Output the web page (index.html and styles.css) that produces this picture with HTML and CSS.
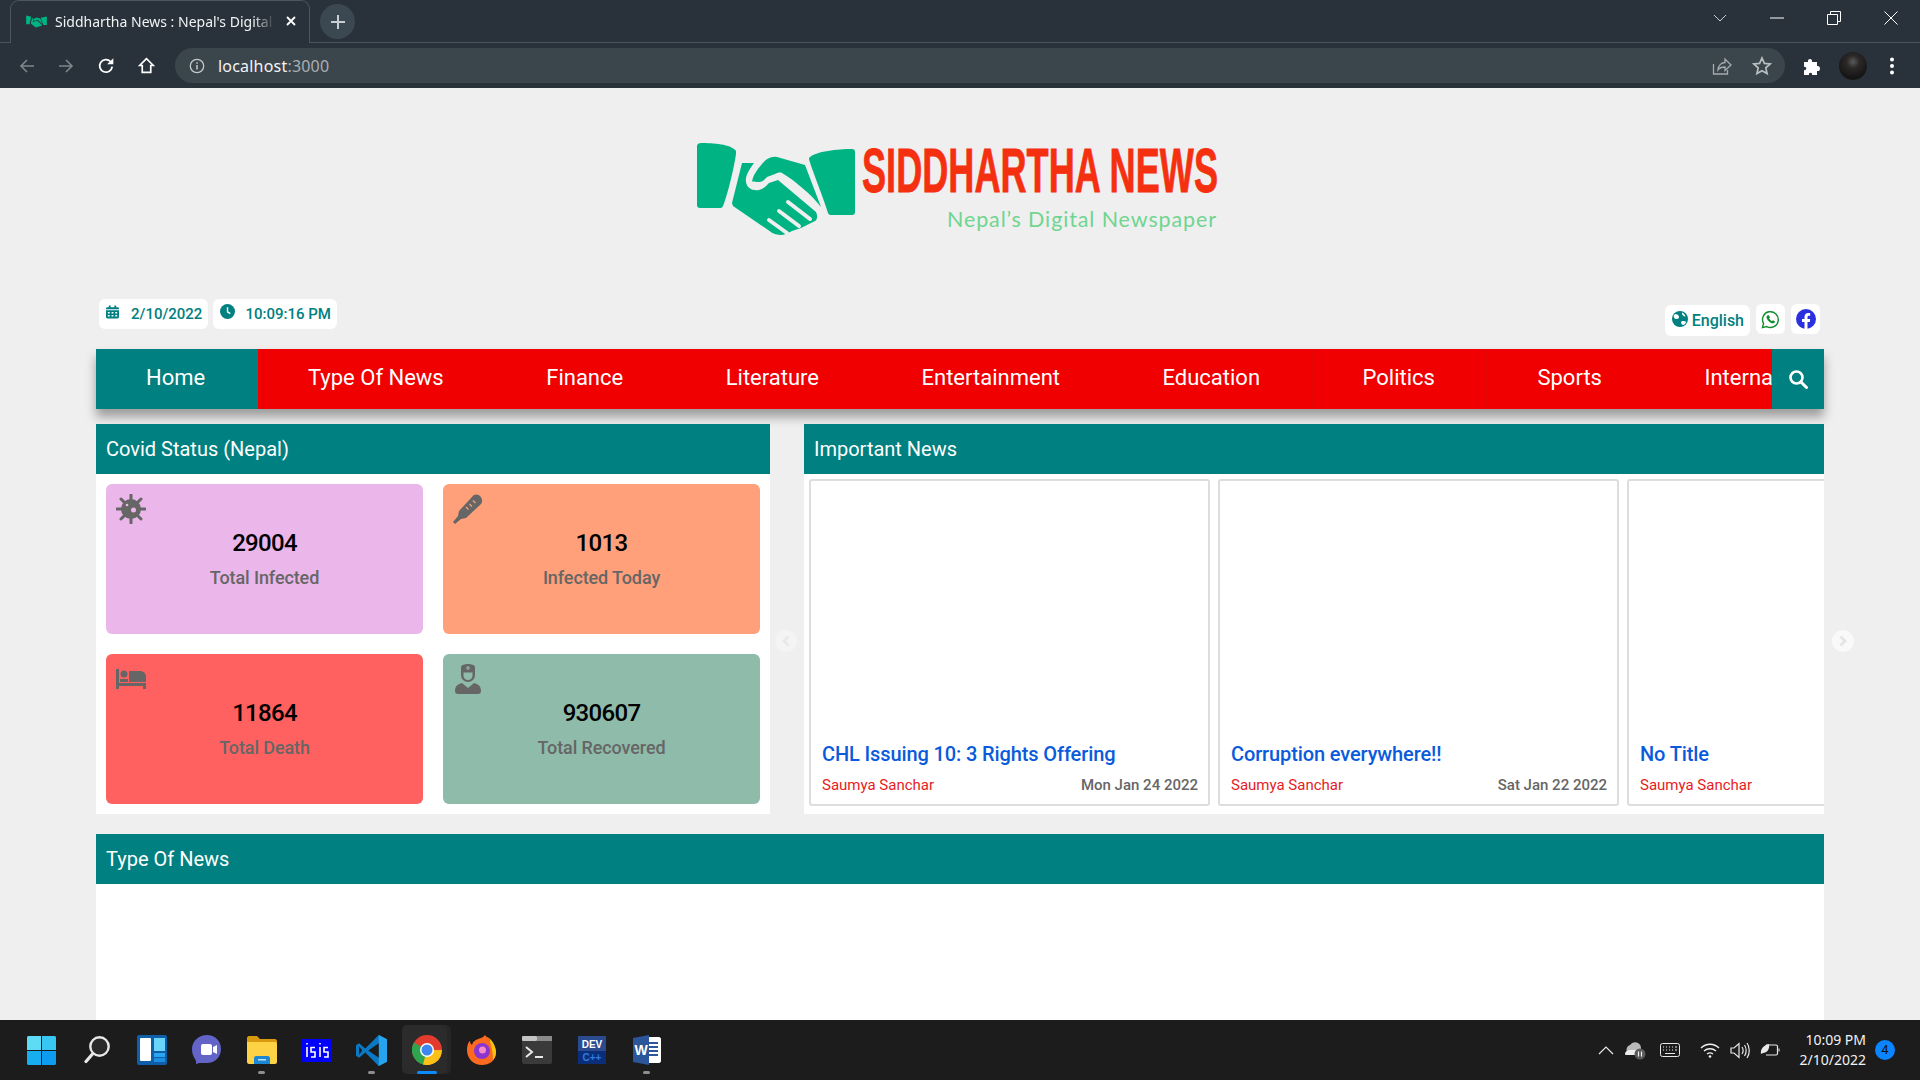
FILE: index.html
```html
<!DOCTYPE html>
<html lang="en">
<head>
    <meta charset="UTF-8">
    <meta name="viewport" content="width=device-width, initial-scale=1.0">
    <title>Siddhartha News</title>
    <link rel="stylesheet" href="styles.css">
</head>
<body>
    <!-- Browser frame -->
    <div class="tab-strip">
        <div class="tab">
            <svg class="tab-favicon" viewBox="0 0 160 96"><path d="M1 3l39 9-13 56H1z M159 9l-46 10 19 56h27z" fill="#00b383"/><path d="M46 23l-10 40 39 30 44-13 2-8-38-32-20 10-12-2 7-25z M56 42l8-17 15-8 30 8 16 42-39-34-15 9z" fill="#00b383"/></svg>
            <span class="tab-title">Siddhartha News : Nepal's Digital</span>
            <svg class="tab-close" viewBox="0 0 12 12"><path d="M2 2l8 8M10 2l-8 8" stroke="#fff" stroke-width="1.8"/></svg>
        </div>
        <div class="new-tab">
            <svg viewBox="0 0 14 14" width="14" height="14"><path d="M7 0v14M0 7h14" stroke="#c8ced2" stroke-width="2"/></svg>
        </div>
        <div class="window-buttons">
            <svg viewBox="0 0 14 8" width="14" height="8"><path d="M1 1l6 6 6-6" fill="none" stroke="#c9cfd3"/></svg>
            <svg viewBox="0 0 14 14" width="14" height="14"><path d="M0 7h14" stroke="#fff"/></svg>
            <svg viewBox="0 0 14 14" width="14" height="14"><path d="M.5 3.500h10v10H.5z M3.500 3V.5h10v10H11" fill="none" stroke="#fff"/></svg>
            <svg viewBox="0 0 14 14" width="14" height="14"><path d="M.5.5l13 13M13.500.5l-13 13" stroke="#fff"/></svg>
        </div>
    </div>
    <div class="toolbar">
        <div class="toolbar-nav">
            <svg viewBox="0 0 16 16" width="16" height="16"><path d="M15 8H2M8 2L2 8l6 6" fill="none" stroke="#7e868c" stroke-width="1.600"/></svg>
            <svg viewBox="0 0 16 16" width="16" height="16"><path d="M1 8h13M8 2l6 6-6 6" fill="none" stroke="#7e868c" stroke-width="1.600"/></svg>
            <svg viewBox="0 0 16 16" width="18" height="18"><path d="M13.500 8.500A5.600 5.600 0 1 1 12 4" fill="none" stroke="#fff" stroke-width="1.600"/><path d="M14.500 1v5.500H9z" fill="#fff"/></svg>
            <svg viewBox="0 0 16 16" width="17" height="17"><path d="M8 1.500L1.500 8H4v6.500h8V8h2.500z" fill="none" stroke="#fff" stroke-width="1.600"/></svg>
        </div>
        <div class="address-bar">
            <svg viewBox="0 0 16 16" width="16" height="16"><circle cx="8" cy="8" r="6.700" fill="none" stroke="#c4c9cc" stroke-width="1.300"/><path d="M8 7v4.500M8 4.200v1.500" stroke="#c4c9cc" stroke-width="1.500"/></svg>
            <span class="address-text">localhost<span class="address-port">:3000</span></span>
            <div class="address-actions">
                <svg viewBox="0 0 20 20" width="20" height="20"><path d="M1.500 8v10h14v-4M6 14c0-5 4-7.500 7-7.500V3l6 6-6 5.500V11c-3 0-5.500.5-7 3z" fill="none" stroke="#a6acb0" stroke-width="1.300"/></svg>
                <svg viewBox="0 0 20 20" width="20" height="20"><path d="M10 2l2.400 5.400 5.800.6-4.400 3.900 1.300 5.700L10 14.700l-5.100 2.900 1.300-5.700L1.800 8l5.800-.6z" fill="none" stroke="#b9bec1" stroke-width="1.700"/></svg>
            </div>
        </div>
        <div class="toolbar-right">
            <svg viewBox="0 0 20 20" width="20" height="20"><path d="M2 6h4c-1-4 5-4 4 0h5v4c4-1 4 6 0 5v4h-5c1-3-4-3-3 0H2v-5c3 1 3-4 0-3z" fill="#fff"/></svg>
            <div class="avatar"></div>
            <svg class="toolbar-menu" viewBox="0 0 6 20" width="6" height="20"><circle cx="3" cy="3.500" r="2" fill="#fff"/><circle cx="3" cy="10" r="2" fill="#fff"/><circle cx="3" cy="16.500" r="2" fill="#fff"/></svg>
        </div>
    </div>

    <!-- Page -->
    <div class="page">
        <div class="logo-row">
            <svg class="logo" viewBox="0 0 530 100" width="530" height="100">
                <path d="M5 3c12 0 30 1 35 8 1 3-7 40-13 55-1 2-2 2-4 2H4c-2 0-3-1-3-3V6c0-2 2-3 4-3z" fill="#00b383"/>
                <path d="M156 9c-14 0-36 2-43 9-1 2 14 38 19 55 1 2 2 2 4 2h20c2 0 3-1 3-3V12c0-2-1-3-3-3z" fill="#00b383"/>
                <path d="M46 23h12c-5 7-9 13-8 19 1 6 6 9 13 8 5-1 8-5 10-7l9-3 38 32c2 4 1 8-1 9l-8 4-6 3-9 3-6 3-4 1c-4 0-9-1-11-3L37 66l-1-3z" fill="#00b383"/>
                <path d="M56 42c1-7 5-12 10-18 4-5 9-8 15-7l28 8 16 42c-9-12-27-27-39-34-2-1-5 0-7 1l-8 3c-2 2-4 5-8 5-4 0-7-1-7 0z" fill="#00b383"/>
                <path d="M92 62l22 17M83 71l20 15M73 80l18 13" stroke="#efefef" stroke-width="4" stroke-linecap="round"/>
                <text class="logo-title" x="166" y="52" textLength="356" lengthAdjust="spacingAndGlyphs">SIDDHARTHA NEWS</text>
                <text class="logo-tagline" x="251" y="87" textLength="269" lengthAdjust="spacing">Nepal’s Digital Newspaper</text>
            </svg>
        </div>

        <div class="info-row">
            <div class="info-left">
                <div class="pill">
                    <svg class="pill-icon-date" viewBox="0 0 14 14" width="13" height="14"><path d="M0 5h14v7.500c0 .8-.7 1.500-1.500 1.500h-11C.7 14 0 13.300 0 12.500zM1.500 2H3V0h2v2h4V0h2v2h1.500c.8 0 1.500.7 1.500 1.500V4H0v-.5C0 2.700.7 2 1.500 2z" fill="#008080"/><path d="M2 7h2v1.500H2zM6 7h2v1.500H6zM10 7h2v1.500h-2zM2 10.300h2v1.500H2zM6 10.300h2v1.500H6zM10 10.300h2v1.500h-2z" fill="#fff"/></svg>
                    <span>2/10/2022</span>
                </div>
                <div class="pill">
                    <svg class="pill-icon-clock" viewBox="0 0 16 16" width="15" height="15"><circle cx="8" cy="8" r="8" fill="#008080"/><path d="M8 3.500V8.500l3 1.800" fill="none" stroke="#fff" stroke-width="1.500"/></svg>
                    <span>10:09:16 PM</span>
                </div>
            </div>
            <div class="info-right">
                <div class="pill pill-lang">
                    <svg viewBox="0 0 16 16" width="16" height="16"><circle cx="8" cy="8" r="8" fill="#008080"/><path d="M3 3c2 0 4 1 4 3S5 8 4 8 2 7 1.500 5zM10 10c2 0 4 0 4 1s-2 3-3 3-3-3-1-4zM10 1.500c2 1 3 2 3.500 4-2 0-4-2-3.500-4z" fill="#fff"/></svg>
                    <span>English</span>
                </div>
                <div class="pill pill-social">
                    <svg viewBox="0 0 20 20" width="19" height="19"><path d="M1.500 18.500l1.200-4.300A8.300 8.300 0 1 1 6 17.400z" fill="#fff" stroke="#128c2e" stroke-width="1.500"/><path d="M7 5.500c-1 .5-1.500 1.800-1 3 .8 2.500 3 4.700 5.500 5.500 1.200.4 2.500 0 3-1 .2-.5.2-1 0-1.200l-2-1-1 1c-1.200-.5-2.500-1.800-3-3l1-1-1-2c-.3-.3-1-.5-1.500-.3z" fill="#128c2e"/></svg>
                </div>
                <div class="pill pill-social">
                    <svg viewBox="0 0 20 20" width="20" height="20"><circle cx="10" cy="10" r="10" fill="#2a2fe0"/><path d="M8.500 20v-7H6v-3h2.500V7.800c0-2.500 1.500-3.800 3.700-3.800 1 0 2 .2 2 .2v2.500H13c-1.200 0-1.500.7-1.500 1.500V10h2.700l-.4 3h-2.300v7z" fill="#fff"/></svg>
                </div>
            </div>
        </div>

        <nav class="main-nav">
            <ul class="nav-list">
                <li class="nav-item nav-home">Home</li>
                <li class="nav-item">Type Of News</li>
                <li class="nav-item">Finance</li>
                <li class="nav-item">Literature</li>
                <li class="nav-item">Entertainment</li>
                <li class="nav-item">Education</li>
                <li class="nav-item">Politics</li>
                <li class="nav-item">Sports</li>
                <li class="nav-item">International</li>
            </ul>
            <div class="nav-search">
                <svg viewBox="0 0 20 20" width="20" height="20"><circle cx="8.500" cy="8.500" r="6" fill="none" stroke="#fff" stroke-width="2.600"/><path d="M13 13l5.500 5.500" stroke="#fff" stroke-width="3" stroke-linecap="round"/></svg>
            </div>
        </nav>

        <div class="top-panels">
            <section class="covid-panel">
                <h2 class="section-title">Covid Status (Nepal)</h2>
                <div class="covid-grid">
                    <div class="stat-card stat-infected">
                        <svg class="stat-icon" viewBox="0 0 30 30" width="30" height="30"><path d="M15 1v28M1 15h28M5 5l20 20M25 5L5 25" stroke="#666" stroke-width="3" stroke-linecap="round"/><circle cx="15" cy="15" r="10" fill="#666"/><circle cx="17.500" cy="16" r="2.500" fill="#ebb6ea"/><circle cx="11" cy="11" r="1.300" fill="#ebb6ea"/></svg>
                        <div class="stat-value">29004</div>
                        <div class="stat-label">Total Infected</div>
                    </div>
                    <div class="stat-card stat-today">
                        <svg class="stat-icon" viewBox="0 0 30 30" width="30" height="30"><path d="M21 1c4-2 9 2 8 7-.3 1.300-1 2.300-2 3L13 24l-5 1-6 5-2-2 5-6 1-5L19 3c.6-.9 1.200-1.500 2-2z" fill="#666"/><path d="M13 13l2.500 2.500M16.500 10l2.500 2.500M20 6.500L22.500 9" stroke="#ffa07a" stroke-width="1.200"/></svg>
                        <div class="stat-value">1013</div>
                        <div class="stat-label">Infected Today</div>
                    </div>
                    <div class="stat-card stat-death">
                        <svg class="stat-icon" viewBox="0 0 30 30" width="30" height="30"><path d="M0 5h3v14h27v6h-3v-3H3v3H0z" fill="#666"/><circle cx="8" cy="10" r="3.500" fill="#666"/><path d="M13 7h11c3 0 6 2 6 6v5H13z" fill="#666"/><path d="M4 15h8v3H4z" fill="#666"/></svg>
                        <div class="stat-value">11864</div>
                        <div class="stat-label">Total Death</div>
                    </div>
                    <div class="stat-card stat-recovered">
                        <svg class="stat-icon stat-icon-md" viewBox="0 0 26 30" width="26" height="30"><path d="M6 3c0-2 4-3 7-3s7 1 7 3v8a7 7 0 0 1-14 0z" fill="#666"/><path d="M8.500 8.500h9v3a4.500 4.500 0 0 1-9 0z" fill="#8fbbaa"/><path d="M13 2v4M11 4h4" stroke="#8fbbaa" stroke-width="1.200"/><path d="M0 27c0-5 3-7 7-8l6 5 6-5c4 1 7 3 7 8 0 2-1 3-3 3H3c-2 0-3-1-3-3z" fill="#666"/></svg>
                        <div class="stat-value">930607</div>
                        <div class="stat-label">Total Recovered</div>
                    </div>
                </div>
            </section>

            <section class="important-panel">
                <h2 class="section-title">Important News</h2>
                <div class="carousel">
                    <div class="carousel-track">
                        <article class="news-card">
                            <div class="news-image"></div>
                            <h3 class="news-title">CHL Issuing 10: 3 Rights Offering</h3>
                            <div class="news-meta"><span class="news-author">Saumya Sanchar</span><span class="news-date">Mon Jan 24 2022</span></div>
                        </article>
                        <article class="news-card">
                            <div class="news-image"></div>
                            <h3 class="news-title">Corruption everywhere!!</h3>
                            <div class="news-meta"><span class="news-author">Saumya Sanchar</span><span class="news-date">Sat Jan 22 2022</span></div>
                        </article>
                        <article class="news-card news-card-last">
                            <div class="news-image"></div>
                            <h3 class="news-title">No Title</h3>
                            <div class="news-meta"><span class="news-author">Saumya Sanchar</span></div>
                        </article>
                    </div>
                </div>
                <div class="carousel-arrow arrow-prev"><svg viewBox="0 0 8 12" width="8" height="12"><path d="M6.500 1.500L2 6l4.500 4.500" fill="none" stroke="#e8e8e8" stroke-width="2.600"/></svg></div>
                <div class="carousel-arrow arrow-next"><svg viewBox="0 0 8 12" width="8" height="12"><path d="M1.500 1.500L6 6l-4.500 4.500" fill="none" stroke="#e4e4e4" stroke-width="2.600"/></svg></div>
            </section>
        </div>

        <section class="type-section">
            <h2 class="section-title">Type Of News</h2>
            <div class="type-body"></div>
        </section>
    </div>

    <!-- Taskbar -->
    <div class="taskbar">
        <div class="task-icons">
            <div class="task-item">
                <svg viewBox="0 0 29 29" width="29" height="29"><path d="M0 1.500C0 .6.600 0 1.500 0H14v14H0z" fill="#5fdcf5"/><path d="M15 0h12.500c.9 0 1.500.6 1.500 1.500V14H15z" fill="#38c6f2"/><path d="M0 15h14v14H1.500C.6 29 0 28.400 0 27.500z" fill="#17aef0"/><path d="M15 15h14v12.500c0 .9-.6 1.500-1.500 1.500H15z" fill="#0e9cf0"/></svg>
            </div>
            <div class="task-item">
                <svg viewBox="0 0 26 28" width="26" height="28"><circle cx="15.500" cy="10.500" r="9.200" fill="#2a2a2a" stroke="#e8e8e8" stroke-width="2.400"/><path d="M8.500 18L2 25.500" stroke="#e8e8e8" stroke-width="3.200" stroke-linecap="round"/></svg>
            </div>
            <div class="task-item">
                <svg viewBox="0 0 30 30" width="30" height="30"><rect width="30" height="30" rx="2" fill="#0f5fa8"/><rect x="3" y="3" width="11" height="23" rx="1" fill="#fff"/><rect x="17" y="3" width="11" height="13" fill="#6bd4fb"/><rect x="17" y="18" width="11" height="4" fill="#2aa5ee"/><rect x="17" y="23" width="11" height="4" fill="#1d8fe0"/></svg>
            </div>
            <div class="task-item">
                <svg viewBox="0 0 30 30" width="30" height="30"><path d="M15 0c8 0 14 6 14 14s-6 14-14 14H7c-1 0-3 2-3 0 0-1 0-3-1-4-2-3-3-6-3-10C0 6 7 0 15 0z" fill="#6264c7"/><rect x="9" y="9" width="11" height="11" rx="2" fill="#fff"/><path d="M21 12l4-2v9l-4-2z" fill="#fff"/></svg>
            </div>
            <div class="task-item task-open">
                <svg viewBox="0 0 30 28" width="30" height="28"><path d="M0 2c0-1 1-2 2-2h8l3 3h15c1 0 2 1 2 2v3H0z" fill="#d99a10"/><path d="M0 6h28c1 0 2 1 2 2v18c0 1-1 2-2 2H2c-1 0-2-1-2-2z" fill="#fdd245"/><path d="M9 20h12c1 0 2 1 2 2v6H7v-6c0-1 1-2 2-2z" fill="#1b87d4"/><rect x="11" y="23" width="8" height="1.500" fill="#bfe3fa"/></svg>
            </div>
            <div class="task-item">
                <svg viewBox="0 0 30 23" width="30" height="23"><rect width="30" height="23" fill="#0000ff"/><path d="M5 4v1.500M5 8v10M13 8.500H9V13h4v5H9M18 4v1.500M18 8v10M26 8.500h-4V13h4v5h-4" fill="none" stroke="#fff" stroke-width="1.600"/></svg>
            </div>
            <div class="task-item task-open">
                <svg viewBox="0 0 30 30" width="31" height="31"><path d="M22 0l8 4v22l-8 4L9 17l-6 5-3-2V10l3-2 6 5z" fill="#0a78c2"/><path d="M22 0l8 4v22l-8 4z" fill="#26a4ee"/><path d="M22 8L12 15l10 7z" fill="#1c1c1c"/><path d="M3 11l3 4-3 4z" fill="#1c1c1c"/></svg>
            </div>
            <div class="task-item task-active">
                <svg viewBox="0 0 30 30" width="30" height="30"><circle cx="15" cy="15" r="15" fill="#e33b2e"/><path d="M15 15L2 7.500A15 15 0 0 0 15 30z" fill="#2ea44f"/><path d="M15 15h15A15 15 0 0 1 11 29.500z" fill="#fbc118"/><circle cx="15" cy="15" r="7" fill="#fff"/><circle cx="15" cy="15" r="5.500" fill="#3f87f0"/></svg>
            </div>
            <div class="task-item">
                <svg viewBox="0 0 30 30" width="30" height="30"><path d="M15 30C7 30 0 24 0 15 0 11 1 7 3 6c0 2 1 3 2 4 1-4 4-5 6-6 3-1 6-2 7-4 1 2 3 2 4 3 0 2 1 3 2 4 3 3 5 7 5 10 0 9-7 13-14 13z" fill="#fb6a1f"/><path d="M22 3c4 3 7 9 7 14 0 3-1 6-3 8 0-9-2-15-4-22z" fill="#fcc10f"/><circle cx="15" cy="16" r="8" fill="#8a35d0"/><circle cx="15.500" cy="15" r="3.500" fill="#f58ac8"/></svg>
            </div>
            <div class="task-item">
                <svg viewBox="0 0 30 28" width="30" height="28"><rect width="30" height="28" rx="2" fill="#3a3a3a"/><rect width="15" height="5" rx="1" fill="#c4c4c4"/><rect x="15" width="15" height="5" fill="#8a8a8a"/><path d="M4 11l6 5-6 5" fill="none" stroke="#e8e8e8" stroke-width="2"/><path d="M13 21h8" stroke="#e8e8e8" stroke-width="2"/></svg>
            </div>
            <div class="task-item">
                <svg viewBox="0 0 28 28" width="28" height="28"><rect width="28" height="28" fill="#2b4a8f"/><rect y="15" width="28" height="13" fill="#0b2e7a"/><text class="dev-icon-text" x="14" y="12">DEV</text><text class="dev-icon-cpp" x="14" y="25">C++</text></svg>
            </div>
            <div class="task-item task-open">
                <svg viewBox="0 0 28 30" width="28" height="30"><path d="M10 2h16c1 0 2 1 2 2v22c0 1-1 2-2 2H10z" fill="#fff"/><path d="M16 8h9M16 12h9M16 16h9M16 20h9" stroke="#2b579a" stroke-width="2"/><path d="M0 3l16-3v30L0 27z" fill="#2b579a"/><text class="word-icon-text" x="8" y="20">W</text></svg>
            </div>
        </div>
        <div class="tray">
            <svg viewBox="0 0 16 10" width="16" height="10"><path d="M1 9l7-7 7 7" fill="none" stroke="#e8e8e8" stroke-width="1.200"/></svg>
            <svg viewBox="0 0 22 20" width="22" height="20"><path d="M3 12a5 5 0 0 1 3-7 6 6 0 0 1 11 3v4z" fill="#b9b9b9"/><path d="M1 14c0-2 2-4 6-4h8v5H3c-1 0-2 0-2-1z" fill="#eee"/><circle cx="16" cy="14" r="5.500" fill="#5a5a5a"/><path d="M14.500 11.500v5M17.500 11.500v5" stroke="#eee" stroke-width="1.200"/></svg>
            <svg class="tray-keyboard" viewBox="0 0 20 14" width="20" height="14"><rect x=".5" y=".5" width="19" height="13" rx="2" fill="none" stroke="#e8e8e8"/><path d="M3 4h1M6 4h1M9 4h1M12 4h1M15 4h2M3 7h1M6 7h1M9 7h1M12 7h1M15 7h2M5 10.500h10" stroke="#e8e8e8"/></svg>
            <svg class="tray-wifi" viewBox="0 0 20 15" width="20" height="15"><path d="M1 5c5-5 13-5 18 0M4 8c3.500-3 8.500-3 12 0M7 11c2-1.500 4-1.500 6 0" fill="none" stroke="#f0f0f0" stroke-width="1.300"/><circle cx="10" cy="13.500" r="1.300" fill="#f0f0f0"/></svg>
            <svg viewBox="0 0 20 17" width="20" height="17"><path d="M1 6h3l5-4.500v14L4 11H1z" fill="none" stroke="#e8e8e8" stroke-width="1.200"/><path d="M12 5c1.300 2 1.300 5 0 7M14.500 3c2.200 3 2.200 8 0 11M17 1c3 4 3 11 0 15" fill="none" stroke="#e8e8e8" stroke-width="1.200"/></svg>
            <svg viewBox="0 0 20 14" width="20" height="14"><path d="M6 2h10c1 0 1.500.5 1.500 1.500v7c0 1-.5 1.500-1.500 1.500H6" fill="none" stroke="#e8e8e8" stroke-width="1.200"/><path d="M18.500 5.500h1v3h-1z" fill="#e8e8e8"/><path d="M1 11C0 6 4 2 9 1c1 5-2 9-6 9z" fill="#e8e8e8"/></svg>
            <div class="tray-clock"><div>10:09 PM</div><div>2/10/2022</div></div>
            <div class="tray-badge">4</div>
        </div>
    </div>
</body>
</html>
```

FILE: styles.css
```css
* {
    box-sizing: border-box;
}
html, body {
    margin: 0;
    height: 100%;
}
body {
    display: flex;
    flex-direction: column;
    height: 1080px;
    overflow: hidden;
    font-family: Roboto, "Liberation Sans", sans-serif;
    background-color: #efefef;
}

/* Browser frame */
.tab-strip {
    display: flex;
    align-items: flex-start;
    height: 43px;
    padding-left: 10px;
    background-color: #29323a;
    border-bottom: 1px solid #4c565d;
}
.tab {
    display: flex;
    align-items: center;
    width: 300px;
    height: 43px;
    padding: 0 12px 2px 15px;
    background-color: #29323a;
    border: 1px solid #4c565d;
    border-bottom: none;
    border-radius: 9px 9px 0 0;
}
.tab-favicon {
    width: 21px;
    height: 13px;
    flex-shrink: 0;
}
.tab-title {
    flex: 1;
    margin-left: 8px;
    white-space: nowrap;
    overflow: hidden;
    font-family: "Noto Sans", sans-serif;
    font-size: 14px;
    color: #f0f3f4;
    -webkit-mask-image: linear-gradient(to right, #000 90%, transparent 100%);
    mask-image: linear-gradient(to right, #000 90%, transparent 100%);
}
.tab-close {
    width: 12px;
    height: 12px;
    margin-left: 10px;
    flex-shrink: 0;
}
.new-tab {
    display: flex;
    align-items: center;
    justify-content: center;
    width: 35px;
    height: 35px;
    margin: 4px 0 0 10px;
    border-radius: 50%;
    background-color: #3b4851;
}
.window-buttons {
    display: flex;
    align-items: center;
    gap: 43px;
    height: 36px;
    margin-left: auto;
    padding-right: 22px;
}
.toolbar {
    display: flex;
    align-items: center;
    height: 45px;
    background-color: #29323a;
}
.toolbar-nav {
    display: flex;
    align-items: center;
    gap: 23px;
    width: 175px;
    padding-left: 19px;
}
.address-bar {
    display: flex;
    align-items: center;
    width: 1610px;
    height: 35px;
    padding: 0 13px 0 14px;
    border-radius: 18px;
    background-color: #3b454c;
}
.address-text {
    margin-left: 13px;
    font-family: "Noto Sans", sans-serif;
    font-size: 16px;
    letter-spacing: 0.2px;
    color: #f3f4f5;
}
.address-port {
    color: #a9afb3;
}
.address-actions {
    display: flex;
    align-items: center;
    gap: 20px;
    margin-left: auto;
}
.toolbar-right {
    display: flex;
    align-items: center;
    gap: 17px;
    padding-left: 17px;
}
.toolbar-menu {
    margin-left: 5px;
}
.avatar {
    width: 28px;
    height: 28px;
    border-radius: 50%;
    background: radial-gradient(circle at 50% 35%, #5a5a5a 0, #2c2828 28%, #161515 70%);
}

/* Page */
.page {
    flex: 1;
    overflow: hidden;
    padding: 0 96px;
}
.logo-row {
    display: flex;
    justify-content: center;
    height: 211px;
    padding: 52px 0 0 2px;
}
.logo {
    overflow: visible;
}
.logo-title {
    font-family: "Liberation Sans", sans-serif;
    font-size: 63px;
    font-weight: bold;
    fill: #f53010;
    stroke: #f53010;
    stroke-width: 0.8px;
}
.logo-tagline {
    font-family: Lato, sans-serif;
    font-size: 21.5px;
    fill: #6fd58f;
}
.info-row {
    display: flex;
    justify-content: space-between;
    height: 50px;
}
.info-left {
    display: flex;
    gap: 5px;
    padding-left: 3px;
}
.info-right {
    display: flex;
    gap: 6px;
    padding: 5px 4px 0 0;
}
.pill {
    display: flex;
    align-items: center;
    height: 30px;
    padding: 0 6px 0 7px;
    border-radius: 6px;
    background-color: #fff;
    font-size: 15px;
    font-weight: 500;
    color: #008080;
}
.pill-icon-date {
    margin: -5px 12px 0 0;
}
.pill-icon-clock {
    margin: -5px 10px 0 0;
}
.pill-lang {
    height: 31px;
    margin-top: 1px;
    font-size: 16px;
}
.pill-lang svg {
    margin: -4px 4px 0 0;
}
.pill-social {
    justify-content: center;
    width: 29px;
    padding: 0;
}
.main-nav {
    display: flex;
    height: 60px;
    box-shadow: 0 8px 10px rgba(0, 0, 0, 0.35);
}
.nav-list {
    flex: 1;
    display: flex;
    min-width: 0;
    margin: 0;
    padding: 0;
    overflow: hidden;
    list-style: none;
    background-color: #f00000;
}
.nav-item {
    flex-shrink: 0;
    padding: 0 51.5px 0 50px;
    line-height: 58px;
    font-size: 22px;
    color: #fff;
    border-right: 1px solid #e40505;
}
.nav-home {
    width: 162px;
    padding: 0 0 0 50px;
    background-color: #008080;
    border-right: none;
}
.nav-search {
    display: flex;
    align-items: center;
    justify-content: center;
    width: 52px;
    background-color: #008080;
}
.top-panels {
    display: flex;
    gap: 34px;
    margin-top: 15px;
}
.section-title {
    height: 50px;
    margin: 0;
    padding-left: 10px;
    line-height: 50px;
    font-size: 20px;
    font-weight: 400;
    color: #fff;
    background-color: #008080;
}
.covid-panel {
    width: 674px;
    height: 390px;
    background-color: #fff;
}
.covid-grid {
    display: grid;
    grid-template-columns: 317px 317px;
    grid-template-rows: 150px 150px;
    gap: 20px;
    padding: 10px;
}
.stat-card {
    position: relative;
    padding-top: 44px;
    border-radius: 6px;
    text-align: center;
}
.stat-infected {
    background-color: #ebb6ea;
}
.stat-today {
    background-color: #ffa07a;
}
.stat-death {
    background-color: #ff6161;
}
.stat-recovered {
    background-color: #8fbbaa;
}
.stat-icon {
    position: absolute;
    top: 10px;
    left: 10px;
}
.stat-icon-md {
    left: 12px;
}
.stat-value {
    line-height: 30px;
    font-size: 24px;
    font-weight: 500;
    letter-spacing: -0.7px;
    color: #000;
}
.stat-label {
    margin-top: 9px;
    line-height: 22px;
    font-size: 18px;
    font-weight: 500;
    letter-spacing: -0.1px;
    color: #666;
}
.important-panel {
    position: relative;
    flex: 1;
    min-width: 0;
    height: 390px;
    background-color: #fff;
}
.carousel {
    height: 340px;
    overflow: hidden;
}
.carousel-track {
    display: flex;
    gap: 8px;
    padding: 5px 0 0 5px;
}
.news-card {
    flex-shrink: 0;
    width: 401px;
    height: 327px;
    padding: 0 10px 0 11px;
    border: 2px solid #ddd;
    border-radius: 3px;
}
.news-image {
    height: 259px;
}
.news-title {
    margin: 0;
    line-height: 28px;
    font-size: 20px;
    font-weight: 500;
    letter-spacing: -0.12px;
    color: #0a5bdc;
}
.news-meta {
    display: flex;
    justify-content: space-between;
    margin-top: 7px;
    line-height: 20px;
    font-size: 15px;
}
.news-author {
    color: #e51c23;
}
.news-date {
    font-weight: 500;
    color: #666;
}
.carousel-arrow {
    position: absolute;
    top: 206px;
    display: flex;
    align-items: center;
    justify-content: center;
    width: 22px;
    height: 22px;
    border-radius: 50%;
}
.arrow-prev {
    left: -29px;
    background-color: rgba(255, 255, 255, 0.3);
}
.arrow-next {
    right: -30px;
    background-color: rgba(255, 255, 255, 0.6);
}
.type-section {
    margin-top: 20px;
}
.type-body {
    height: 200px;
    background-color: #fff;
}

/* Taskbar */
.taskbar {
    display: flex;
    align-items: center;
    justify-content: space-between;
    height: 60px;
    padding-left: 14px;
    background-color: #1c1c1c;
}
.task-icons {
    display: flex;
}
.task-item {
    position: relative;
    display: flex;
    align-items: center;
    justify-content: center;
    width: 55px;
    height: 60px;
}
.task-item svg {
    position: relative;
}
.task-open::after, .task-active::after {
    content: "";
    position: absolute;
    left: 24px;
    bottom: 6px;
    width: 7px;
    height: 3px;
    border-radius: 2px;
    background-color: #8e8e8e;
}
.task-active::before {
    content: "";
    position: absolute;
    top: 5px;
    bottom: 6px;
    left: 3px;
    width: 45px;
    border-radius: 5px;
    background-color: #2b2b2b;
    box-shadow: 4px 0 0 #262626;
}
.task-active::after {
    left: 18px;
    width: 20px;
    background-color: #0a8cff;
}
.dev-icon-text, .dev-icon-cpp {
    font-family: "Liberation Sans", sans-serif;
    font-size: 10px;
    font-weight: bold;
    text-anchor: middle;
    fill: #fff;
}
.dev-icon-cpp {
    fill: #2f7be0;
}
.word-icon-text {
    font-family: "Liberation Sans", sans-serif;
    font-size: 14px;
    font-weight: bold;
    text-anchor: middle;
    fill: #fff;
}
.tray {
    display: flex;
    align-items: center;
    gap: 10px;
    padding-right: 25px;
}
.tray-keyboard {
    margin-left: 4px;
}
.tray-wifi {
    margin-left: 10px;
}
.tray-clock {
    margin-left: 10px;
    text-align: right;
    font-family: "Noto Sans", sans-serif;
    font-size: 14px;
    line-height: 20px;
    color: #f2f2f2;
}
.tray-badge {
    width: 20px;
    height: 20px;
    margin-left: -1px;
    border-radius: 50%;
    background-color: #0a84ff;
    text-align: center;
    font-size: 13px;
    line-height: 20px;
    color: #111;
}
```
